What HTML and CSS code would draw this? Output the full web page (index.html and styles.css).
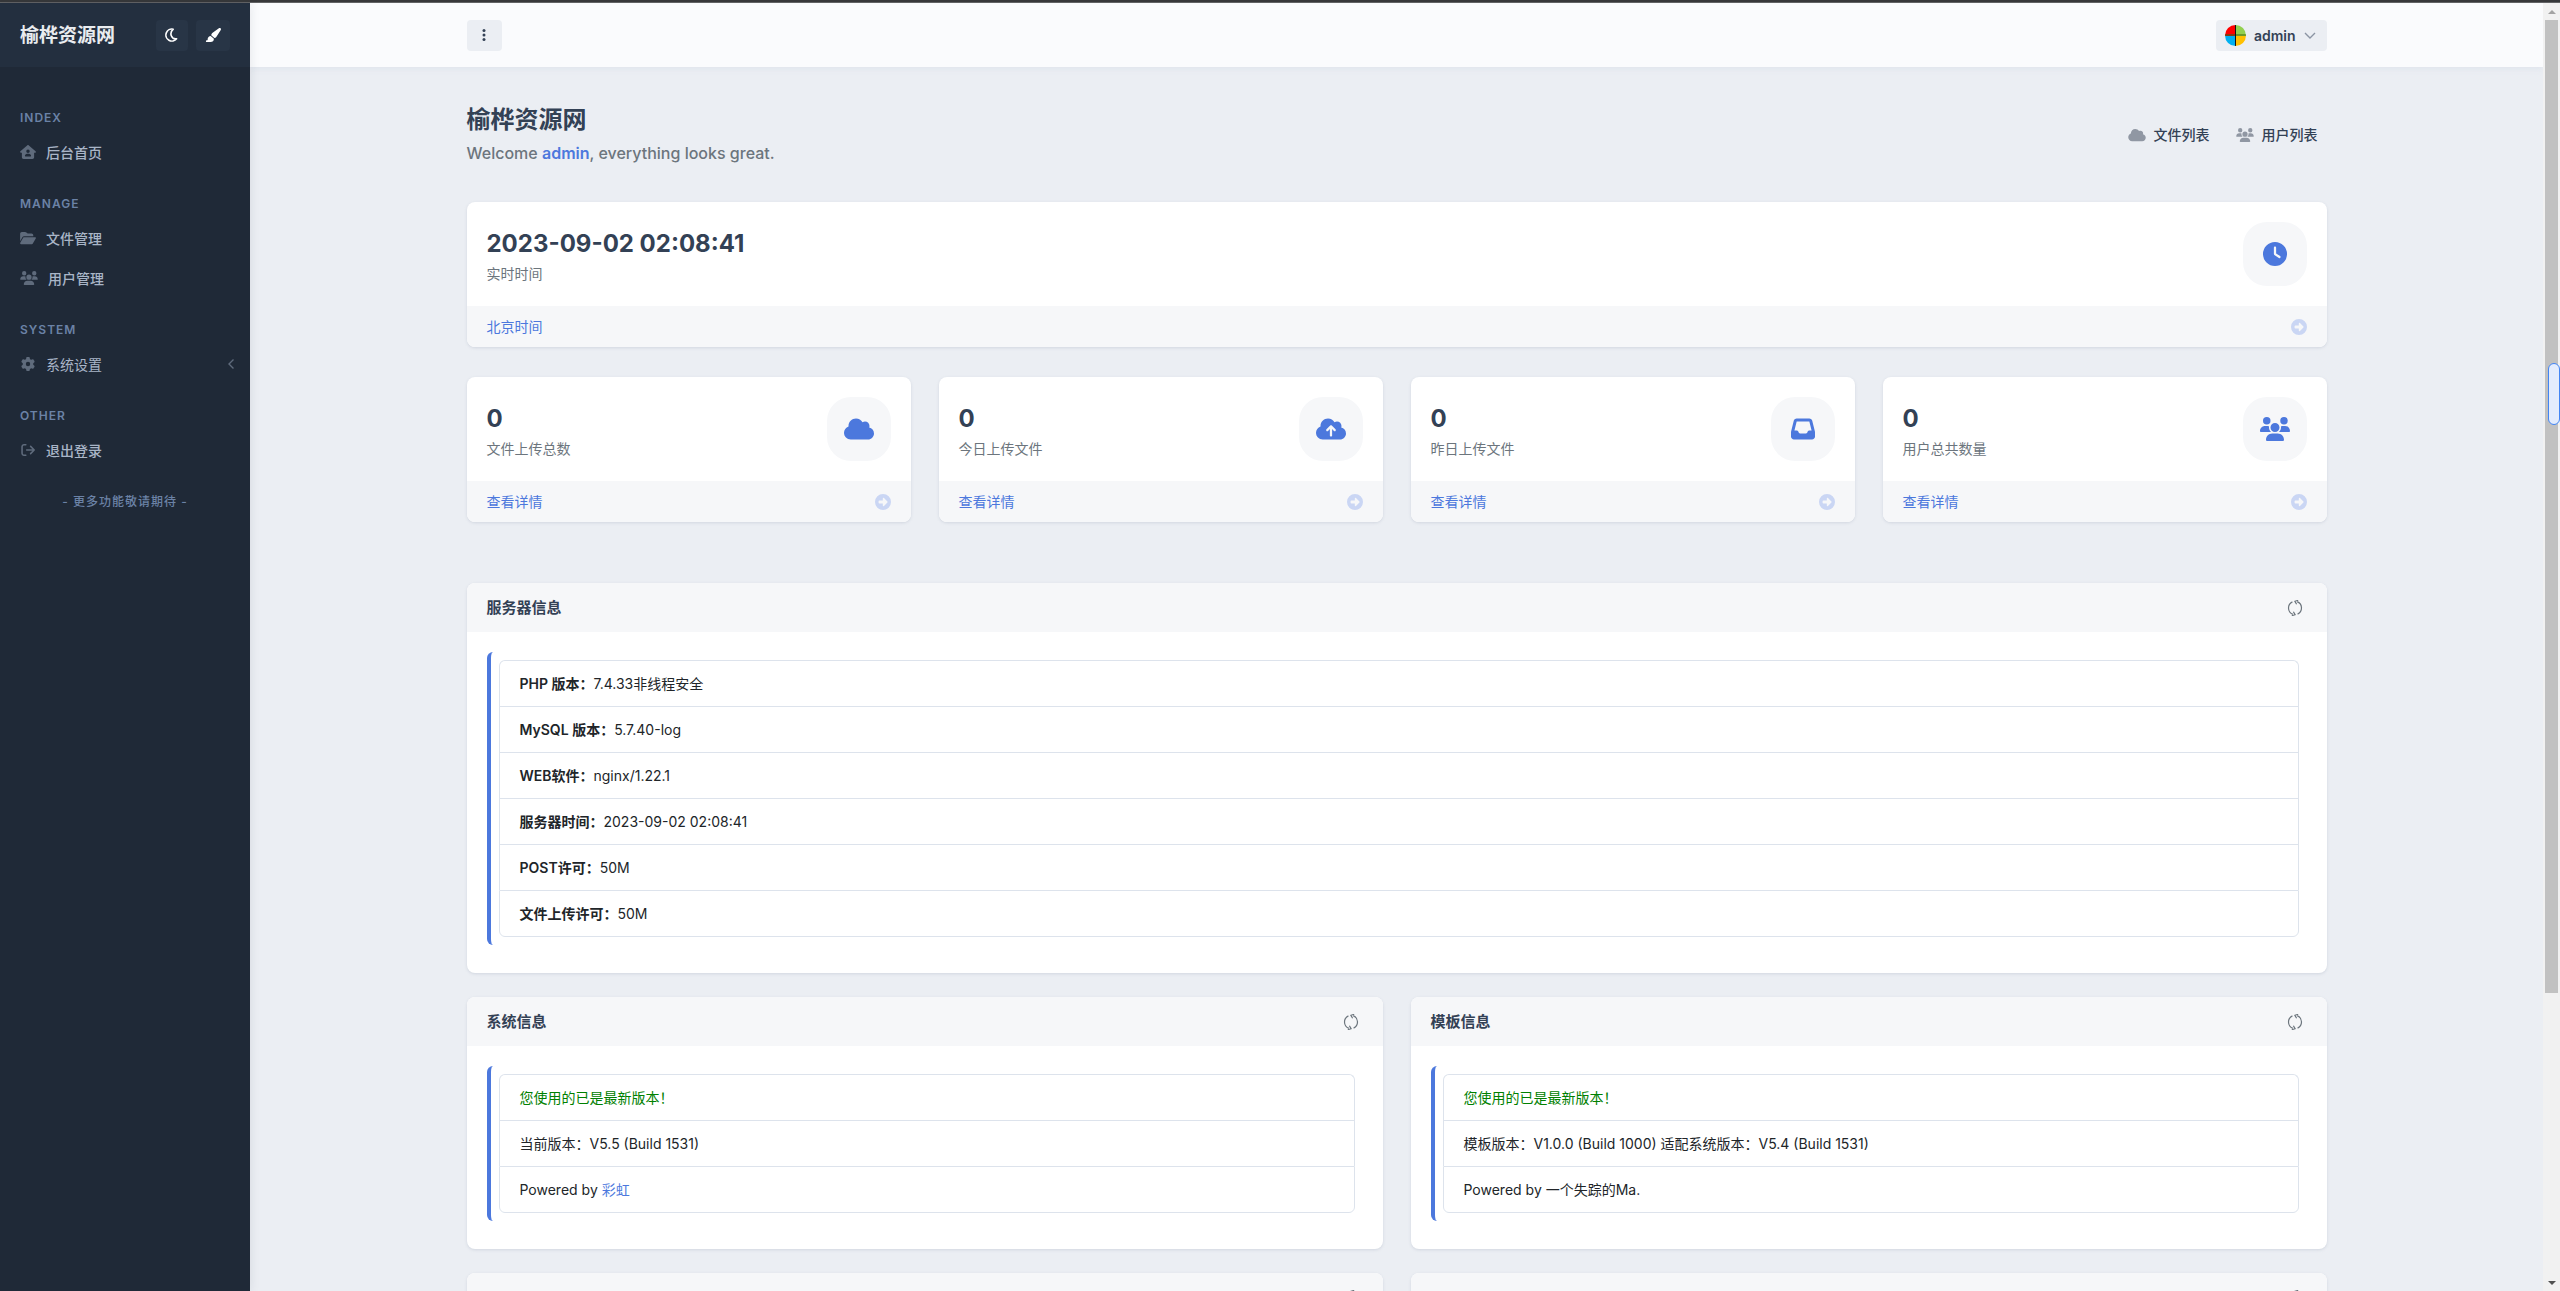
FILE: index.html
```html
<!DOCTYPE html>
<html lang="zh-CN">
<head>
  <meta charset="utf-8">
  <title>榆桦资源网</title>
  <link rel="stylesheet" href="styles.css">
</head>
<body>

  <!-- icon sprite -->
  <svg class="sprite" aria-hidden="true">
    <symbol id="cloud" viewBox="0 0 640 512"><path d="M0 336c0 79.5 64.5 144 144 144H512c70.7 0 128-57.3 128-128c0-61.9-44-113.6-102.4-125.4c4.1-10.7 6.4-22.4 6.4-34.6c0-53-43-96-96-96c-19.7 0-38.1 6-53.3 16.2C367 64.2 315.3 32 256 32C167.6 32 96 103.6 96 192c0 2.7 .1 5.4 .2 8.1C40.2 219.8 0 273.2 0 336z"/></symbol>
    <symbol id="cloud-up" viewBox="0 0 640 512"><path d="M144 480C64.5 480 0 415.5 0 336c0-62.8 40.2-116.2 96.2-135.9c-.1-2.7-.2-5.4-.2-8.1c0-88.4 71.6-160 160-160c59.3 0 111 32.2 138.7 80.2C409.9 102 428.3 96 448 96c53 0 96 43 96 96c0 12.2-2.3 23.8-6.4 34.6C596 238.4 640 290.1 640 352c0 70.7-57.3 128-128 128H144zm79-217c-9.4 9.4-9.4 24.6 0 33.9s24.6 9.4 33.9 0l39-39V392c0 13.3 10.7 24 24 24s24-10.7 24-24V257.9l39 39c9.4 9.4 24.6 9.4 33.9 0s9.4-24.6 0-33.9l-80-80c-9.4-9.4-24.6-9.4-33.9 0l-80 80z"/></symbol>
    <symbol id="clock" viewBox="0 0 512 512"><path fill-rule="evenodd" d="M256 0a256 256 0 1 1 0 512A256 256 0 1 1 256 0zM232 120V256c0 8 4 15.5 10.7 20l96 64c11 7.4 25.9 4.4 33.3-6.7s4.4-25.9-6.7-33.3L280 243.2V120c0-13.3-10.7-24-24-24s-24 10.7-24 24z"/></symbol>
    <symbol id="inbox" viewBox="0 0 512 512"><path fill-rule="evenodd" d="M121 32C91.6 32 66 52 58.9 80.5L1.9 308.4C.6 313.5 0 318.7 0 323.9V416c0 35.3 28.7 64 64 64H448c35.3 0 64-28.7 64-64V323.9c0-5.2-.6-10.4-1.9-15.5l-57-227.9C446 52 420.4 32 391 32H121zm0 64H391l48 192H387.8c-12.1 0-23.2 6.8-28.6 17.7l-14.3 28.6c-5.4 10.8-16.5 17.7-28.6 17.7H195.8c-12.1 0-23.2-6.8-28.6-17.7l-14.3-28.6c-5.4-10.8-16.5-17.7-28.6-17.7H73L121 96z"/></symbol>
    <symbol id="users" viewBox="0 0 640 512"><path d="M144 0a80 80 0 1 1 0 160A80 80 0 1 1 144 0zM512 0a80 80 0 1 1 0 160A80 80 0 1 1 512 0zM0 298.7C0 239.8 47.8 192 106.7 192h42.7c15.9 0 31 3.5 44.6 9.7c-1.3 7.2-1.9 14.7-1.9 22.3c0 38.2 16.8 72.5 43.3 96c-.2 0-.4 0-.7 0H21.3C9.6 320 0 310.4 0 298.7zM405.3 320c-.2 0-.4 0-.7 0c26.6-23.5 43.3-57.8 43.3-96c0-7.6-.7-15-1.9-22.3c13.6-6.3 28.7-9.7 44.6-9.7h42.7C592.2 192 640 239.8 640 298.7c0 11.8-9.6 21.3-21.3 21.3H405.3zM224 224a96 96 0 1 1 192 0 96 96 0 1 1 -192 0zM128 485.3C128 411.7 187.7 352 261.3 352H378.7C452.3 352 512 411.7 512 485.3c0 14.7-11.9 26.7-26.7 26.7H154.7c-14.7 0-26.7-11.9-26.7-26.7z"/></symbol>
    <symbol id="gear" viewBox="0 0 512 512"><path fill-rule="evenodd" d="M495.9 166.6c3.2 8.7 .5 18.4-6.4 24.6l-43.3 39.4c1.1 8.3 1.7 16.8 1.7 25.4s-.6 17.1-1.7 25.4l43.3 39.4c6.9 6.2 9.6 15.9 6.4 24.6c-4.4 11.9-9.7 23.3-15.8 34.3l-4.7 8.1c-6.6 11-14 21.4-22.1 31.2c-5.9 7.2-15.7 9.6-24.5 6.8l-55.7-17.7c-13.4 10.3-28.2 18.9-44 25.4l-12.5 57.1c-2 9.1-9 16.3-18.2 17.8c-13.8 2.3-28 3.5-42.5 3.5s-28.7-1.2-42.5-3.5c-9.2-1.5-16.2-8.7-18.2-17.8l-12.5-57.1c-15.8-6.5-30.6-15.1-44-25.4L83.1 425.9c-8.8 2.8-18.6 .3-24.5-6.8c-8.1-9.8-15.5-20.2-22.1-31.2l-4.7-8.1c-6.1-11-11.4-22.4-15.8-34.3c-3.2-8.7-.5-18.4 6.4-24.6l43.3-39.4C64.6 273.1 64 264.6 64 256s.6-17.1 1.7-25.4L22.4 191.2c-6.9-6.2-9.6-15.9-6.4-24.6c4.4-11.9 9.7-23.3 15.8-34.3l4.7-8.1c6.6-11 14-21.4 22.1-31.2c5.9-7.2 15.7-9.6 24.5-6.8l55.7 17.7c13.4-10.3 28.2-18.9 44-25.4l12.5-57.1c2-9.1 9-16.3 18.2-17.8C227.3 1.2 241.5 0 256 0s28.7 1.2 42.5 3.5c9.2 1.5 16.2 8.7 18.2 17.8l12.5 57.1c15.8 6.5 30.6 15.1 44 25.4l55.7-17.7c8.8-2.8 18.6-.3 24.5 6.8c8.1 9.8 15.5 20.2 22.1 31.2l4.7 8.1c6.1 11 11.4 22.4 15.8 34.3zM256 336a80 80 0 1 0 0-160 80 80 0 1 0 0 160z"/></symbol>
    <symbol id="folder" viewBox="0 0 576 512"><path d="M88.7 223.8L0 375.8V96C0 60.7 28.7 32 64 32H181.5c17 0 33.3 6.7 45.3 18.7l26.5 26.5c12 12 28.3 18.7 45.3 18.7H416c35.3 0 64 28.7 64 64v32H144c-22.8 0-43.8 12.1-55.3 31.8zm27.6 16.1C122.1 230 132.6 224 144 224H544c11.5 0 22 6.1 27.7 16.1s5.7 22.2-.1 32.1l-112 192C453.9 474 443.4 480 432 480H32c-11.5 0-22-6.1-27.7-16.1s-5.7-22.2 .1-32.1l112-192z"/></symbol>
    <symbol id="home" viewBox="0 0 576 512"><path fill-rule="evenodd" d="M543.8 287.6c17 0 32-14 32-32.1c1-9-3-17-11-24L309.5 7c-6-5-14-7-21-7s-15 1-22 8L10 231.5c-7 7-10 15-10 24c0 18 14 32.1 32 32.1h32V448c0 35.3 28.7 64 64 64H448.5c35.5 0 64.2-28.8 64-64.3l-.7-160.2h32zM288 160a64 64 0 1 1 0 128 64 64 0 1 1 0-128zM176 400c0-44.2 35.8-80 80-80h64c44.2 0 80 35.8 80 80c0 8.8-7.2 16-16 16H192c-8.8 0-16-7.2-16-16z"/></symbol>
    <symbol id="brush" viewBox="0 0 576 512"><path d="M339.3 367.1c27.3-3.9 51.9-19.4 67.2-42.9L568.2 74.1c12.6-19.5 9.4-45.3-7.6-61.2S517.7-4.4 499.1 9.6L262.4 187.2c-24 18-38.2 46.1-38.4 76.1L339.3 367.1zm-19.6 25.4l-116-104.4C143.9 290.3 96 339.6 96 400c0 3.9 .2 7.8 .6 11.6C98.4 429.1 86.4 448 68.8 448H64c-17.7 0-32 14.3-32 32s14.3 32 32 32H208c61.9 0 112-50.1 112-112c0-2.5-.1-5-.2-7.5z"/></symbol>
    <symbol id="moon" viewBox="1 0 14 14"><path fill="none" stroke="currentColor" stroke-width="1.6" stroke-linejoin="round" d="M9.2 1.2A6 6 0 1 0 12.6 10.8C7.4 11.6 4.8 5.2 9.2 1.2z"/></symbol>
    <symbol id="dots" viewBox="0 0 14 14"><circle cx="7" cy="2.5" r="1.5"/><circle cx="7" cy="7" r="1.5"/><circle cx="7" cy="11.5" r="1.5"/></symbol>
    <symbol id="logout" viewBox="0 0 16 16"><path fill="none" stroke="currentColor" stroke-width="1.8" stroke-linecap="round" stroke-linejoin="round" d="M5.5 2H3.6A2.2 2.2 0 0 0 1.2 4.2v7.6A2.2 2.2 0 0 0 3.6 14h1.9M6.5 8h8.6M11 3.9L15.1 8 11 12.1"/></symbol>
    <symbol id="left" viewBox="0 0 10 10"><path fill="none" stroke="currentColor" stroke-width="1.4" d="M7.5 .5L3 5l4.5 4.5"/></symbol>
    <symbol id="down" viewBox="0 0 12 12"><path fill="none" stroke="currentColor" stroke-width="1.4" d="M1 4l5 5 5-5"/></symbol>
    <symbol id="go" viewBox="0 0 16 16"><path fill-rule="evenodd" d="M8 0a8 8 0 1 1 0 16A8 8 0 1 1 8 0zM4.4 6.5c-.5 0-.8.3-.8.8v1.4c0 .5.3.8.8.8h3.4v1.9c0 .7.7 1 1.2.6l3.4-3.4c.4-.4.4-.8 0-1.2L9 4c-.5-.4-1.2-.1-1.2.6v1.9z"/></symbol>
    <symbol id="refresh" viewBox="0 0 16 16"><path fill="none" stroke="currentColor" stroke-width="1.2" d="M5.4 1.9A6.8 6.8 0 0 0 5.9 14.4M10.6 14.1A6.8 6.8 0 0 0 10.1 1.6M11.2 .3L7.9 1.3l1.7 3M4.8 15.7l3.3-1-1.7-3"/></symbol>
  </svg>

  <div class="window-edge"></div>

  <div class="page">
    <aside class="sidebar">
      <div class="sidebar-header">
        <a class="brand" href="#">榆桦资源网</a>
        <button class="side-btn" aria-label="夜间模式"><svg class="icon-14"><use href="#moon"/></svg></button>
        <button class="side-btn wide" aria-label="主题"><svg class="icon-16"><use href="#brush"/></svg></button>
      </div>
      <nav class="nav">
        <div class="nav-heading">Index</div>
        <a class="nav-link" href="#"><svg><use href="#home"/></svg>后台首页</a>
        <div class="nav-heading">Manage</div>
        <a class="nav-link" href="#"><svg><use href="#folder"/></svg>文件管理</a>
        <a class="nav-link" href="#"><svg class="users"><use href="#users"/></svg>用户管理</a>
        <div class="nav-heading">System</div>
        <a class="nav-link sub" href="#"><svg><use href="#gear"/></svg>系统设置<svg class="caret"><use href="#left"/></svg></a>
        <div class="nav-heading">Other</div>
        <a class="nav-link" href="#"><svg><use href="#logout"/></svg>退出登录</a>
        <div class="nav-heading center">- 更多功能敬请期待 -</div>
      </nav>
    </aside>

    <div class="main">
      <header class="topbar">
        <div class="container">
          <button class="top-btn dots" aria-label="菜单"><svg class="icon-14"><use href="#dots"/></svg></button>
          <button class="top-btn user">
            <svg class="avatar" viewBox="0 0 21 21">
              <clipPath id="round"><circle cx="10.5" cy="10.5" r="10.5"/></clipPath>
              <g clip-path="url(#round)">
                <path fill="#f00" d="M0 0h10v10H0z"/>
                <path fill="#92d050" d="M11 0h10v10H11z"/>
                <path fill="#00b0f0" d="M0 10h10v11H0z"/>
                <path fill="#ffc000" d="M11 10h10v11H11z"/>
                <path fill="#8a3a10" d="M0 9h10v2H0z"/>
                <path fill="#6a9a2c" d="M11 9h10v2H11z"/>
                <path fill="#111" d="M10 0h1v21h-1z"/>
              </g>
            </svg>
            admin
            <svg class="icon-12"><use href="#down"/></svg>
          </button>
        </div>
      </header>

      <main class="container content">
        <div class="hero">
          <div>
            <h1>榆桦资源网</h1>
            <h2>Welcome <a href="#">admin</a>, everything looks great.</h2>
          </div>
          <div class="hero-links">
            <a href="#"><svg><use href="#cloud"/></svg>文件列表</a>
            <a href="#"><svg><use href="#users"/></svg>用户列表</a>
          </div>
        </div>

        <div class="stats">
          <div class="stat full">
            <div class="stat-body">
              <div>
                <div class="num">2023-09-02 02:08:41</div>
                <div class="label">实时时间</div>
              </div>
              <div class="stat-icon"><svg><use href="#clock"/></svg></div>
            </div>
            <a class="stat-footer" href="#">北京时间<svg><use href="#go"/></svg></a>
          </div>
          <div class="stat">
            <div class="stat-body">
              <div>
                <div class="num">0</div>
                <div class="label">文件上传总数</div>
              </div>
              <div class="stat-icon"><svg><use href="#cloud"/></svg></div>
            </div>
            <a class="stat-footer" href="#">查看详情<svg><use href="#go"/></svg></a>
          </div>
          <div class="stat">
            <div class="stat-body">
              <div>
                <div class="num">0</div>
                <div class="label">今日上传文件</div>
              </div>
              <div class="stat-icon"><svg><use href="#cloud-up"/></svg></div>
            </div>
            <a class="stat-footer" href="#">查看详情<svg><use href="#go"/></svg></a>
          </div>
          <div class="stat">
            <div class="stat-body">
              <div>
                <div class="num">0</div>
                <div class="label">昨日上传文件</div>
              </div>
              <div class="stat-icon"><svg><use href="#inbox"/></svg></div>
            </div>
            <a class="stat-footer" href="#">查看详情<svg><use href="#go"/></svg></a>
          </div>
          <div class="stat">
            <div class="stat-body">
              <div>
                <div class="num">0</div>
                <div class="label">用户总共数量</div>
              </div>
              <div class="stat-icon"><svg><use href="#users"/></svg></div>
            </div>
            <a class="stat-footer" href="#">查看详情<svg><use href="#go"/></svg></a>
          </div>
        </div>

        <div class="blocks">
          <section class="block full">
            <div class="block-header">
              <h3>服务器信息</h3>
              <button aria-label="刷新"><svg><use href="#refresh"/></svg></button>
            </div>
            <div class="block-content">
              <ul class="list">
                <li><b>PHP 版本：</b>7.4.33非线程安全</li>
                <li><b>MySQL 版本：</b>5.7.40-log</li>
                <li><b>WEB软件：</b>nginx/1.22.1</li>
                <li><b>服务器时间：</b>2023-09-02 02:08:41</li>
                <li><b>POST许可：</b>50M</li>
                <li><b>文件上传许可：</b>50M</li>
              </ul>
            </div>
          </section>

          <section class="block">
            <div class="block-header">
              <h3>系统信息</h3>
              <button aria-label="刷新"><svg><use href="#refresh"/></svg></button>
            </div>
            <div class="block-content">
              <ul class="list">
                <li class="ok">您使用的已是最新版本！</li>
                <li>当前版本：V5.5 (Build 1531)</li>
                <li>Powered by <a href="#">彩虹</a></li>
              </ul>
            </div>
          </section>

          <section class="block">
            <div class="block-header">
              <h3>模板信息</h3>
              <button aria-label="刷新"><svg><use href="#refresh"/></svg></button>
            </div>
            <div class="block-content">
              <ul class="list">
                <li class="ok">您使用的已是最新版本！</li>
                <li>模板版本：V1.0.0 (Build 1000) 适配系统版本：V5.4 (Build 1531)</li>
                <li>Powered by 一个失踪的Ma.</li>
              </ul>
            </div>
          </section>

          <section class="block">
            <div class="block-header">
              <h3></h3>
              <button aria-label="刷新"><svg><use href="#refresh"/></svg></button>
            </div>
          </section>

          <section class="block">
            <div class="block-header">
              <h3></h3>
              <button aria-label="刷新"><svg><use href="#refresh"/></svg></button>
            </div>
          </section>
        </div>
      </main>
    </div>

    <div class="scrollbar">
      <div class="arrow up"></div>
      <div class="track"><div class="thumb"></div></div>
      <div class="arrow down"></div>
      <div class="marker"></div>
    </div>
  </div>

</body>
</html>
```
FILE: styles.css
```css
* {
  box-sizing: border-box;
}

body {
  margin: 0;
  height: 100vh;
  display: flex;
  flex-direction: column;
  overflow: hidden;
  font-family: Inter, "Noto Sans CJK SC", sans-serif;
  font-size: 14px;
  line-height: 21px;
  color: #212529;
  background: #ebeef3;
}

a {
  color: #4c78dd;
  text-decoration: none;
}

button {
  font: inherit;
  border: 0;
  padding: 0;
  cursor: pointer;
}

svg {
  fill: currentColor;
  flex: none;
}

h1, h2, h3 {
  margin: 0;
}

.sprite {
  display: none;
}

.icon-12 { width: 12px; height: 12px; }
.icon-14 { width: 14px; height: 14px; }
.icon-16 { width: 16px; height: 16px; }

.window-edge {
  flex: none;
  height: 3px;
  background: #37383a;
  border-bottom: 1px solid #626365;
}

.page {
  flex: 1;
  min-height: 0;
  display: flex;
}

/* sidebar */
.sidebar {
  flex: none;
  width: 250px;
  background: #1f2937;
  box-shadow: 0 0 10px rgba(31, 41, 55, 0.1);
  z-index: 1;
}

.sidebar-header {
  height: 64px;
  padding: 0 20px;
  display: flex;
  align-items: center;
  gap: 8px;
  background: #232f3f;
}

.brand {
  flex: 1;
  font-size: 19px;
  font-weight: 700;
  color: #e9ecef;
}

.side-btn {
  width: 32px;
  height: 31px;
  display: flex;
  align-items: center;
  justify-content: center;
  color: #fff;
  background: #283546;
  border-radius: 4px;
}

.side-btn.wide {
  width: 34px;
}

.nav {
  padding-top: 19px;
}

.nav-heading {
  padding: 25px 20px 7px;
  font-size: 12px;
  line-height: 14px;
  font-weight: 600;
  letter-spacing: 1px;
  text-transform: uppercase;
  color: #6b82a6;
}

.nav-heading.center {
  text-align: center;
  font-weight: 500;
}

.nav-link {
  height: 40px;
  padding: 0 20px;
  display: flex;
  align-items: center;
  font-weight: 500;
  color: #a9b5c7;
}

.nav-link.sub {
  font-weight: 400;
}

.nav-link svg {
  width: 16px;
  height: 14px;
  margin-right: 10px;
  color: #5f6b7c;
}

.nav-link svg.users {
  width: 18px;
}

.nav-link svg.caret {
  width: 10px;
  height: 10px;
  margin: 0 -6px 0 auto;
}

/* main column */
.main {
  flex: 1;
  min-width: 0;
  overflow: hidden;
}

.container {
  width: 100%;
  max-width: 1916px;
  margin: 0 auto;
  padding: 0 28px;
}

.topbar {
  background: #fafbfd;
  box-shadow: 0 2px 5px rgba(200, 208, 224, 0.3);
}

.topbar .container {
  height: 64px;
  display: flex;
  align-items: center;
  justify-content: space-between;
}

.top-btn {
  height: 31px;
  display: flex;
  align-items: center;
  justify-content: center;
  gap: 8px;
  font-weight: 600;
  color: #334155;
  background: #ebeef3;
  border-radius: 4px;
}

.top-btn.dots {
  width: 35px;
}

.top-btn.user {
  padding: 0 11px 0 9px;
}

.avatar {
  width: 21px;
  height: 21px;
}

.top-btn .icon-12 {
  color: #8b94a3;
}

.hero {
  height: 135px;
  display: flex;
  align-items: center;
  justify-content: space-between;
}

.hero h1 {
  margin-bottom: 6px;
  font-size: 24px;
  line-height: 30px;
  font-weight: 700;
  color: #334155;
}

.hero h2 {
  font-size: 16px;
  line-height: 24px;
  font-weight: 500;
  color: #6c757d;
}

.hero h2 a {
  font-weight: 600;
}

.hero-links {
  display: flex;
  gap: 26px;
  padding-right: 9px;
}

.hero-links a {
  display: flex;
  align-items: center;
  gap: 8px;
  font-weight: 500;
  color: #334155;
}

.hero-links svg {
  width: 18px;
  height: 14px;
  color: #9097a3;
}

/* stat tiles */
.stats {
  display: grid;
  grid-template-columns: repeat(4, 1fr);
  gap: 30px 28px;
  margin-bottom: 61px;
}

.full {
  grid-column: 1 / -1;
}

.stat, .block {
  background: #fff;
  border-radius: 8px;
  overflow: hidden;
  box-shadow: 0 1px 3px rgba(150, 160, 180, 0.3);
}

.stat-body {
  height: 104px;
  padding: 0 20px;
  display: flex;
  align-items: center;
  justify-content: space-between;
}

.num {
  font-size: 24px;
  line-height: 38px;
  font-weight: 700;
  color: #334155;
}

.label {
  line-height: 21px;
  color: #6c757d;
}

.stat-icon {
  width: 64px;
  height: 64px;
  display: flex;
  align-items: center;
  justify-content: center;
  color: #4c78dd;
  background: #f6f7f9;
  border-radius: 24px;
}

.stat-icon svg {
  width: 30px;
  height: 24px;
}

.stat-footer {
  height: 41px;
  padding: 0 20px;
  display: flex;
  align-items: center;
  justify-content: space-between;
  background: #f6f7f9;
}

.stat-footer svg {
  width: 16px;
  height: 16px;
  color: #cad6f4;
}

/* info blocks */
.blocks {
  display: grid;
  grid-template-columns: 1fr 1fr;
  gap: 24px 28px;
}

.block-header {
  height: 49px;
  padding: 0 24px 0 20px;
  display: flex;
  align-items: center;
  justify-content: space-between;
  background: #f6f7f9;
}

.block-header h3 {
  font-size: 15px;
  font-weight: 600;
  color: #334155;
}

.block-header button {
  display: flex;
  background: none;
  color: #6c757d;
}

.block-header svg {
  width: 16px;
  height: 16px;
}

.block-content {
  padding: 20px 20px 28px;
}

.list {
  list-style: none;
  margin: 0;
  padding: 8px;
  border-left: 4px solid #4c78dd;
  border-radius: 6px;
}

.list li {
  height: 46px;
  padding: 0 20px;
  line-height: 45px;
  border: 1px solid #dde3ec;
  border-bottom: 0;
}

.list li:first-child {
  border-radius: 6px 6px 0 0;
}

.list li:last-child {
  height: 47px;
  border-bottom: 1px solid #dde3ec;
  border-radius: 0 0 6px 6px;
}

.list b {
  font-weight: 600;
}

.ok {
  color: #008000;
}

/* scrollbar */
.scrollbar {
  position: relative;
  flex: none;
  width: 17px;
  display: flex;
  flex-direction: column;
  background: #f1f1f1;
}

.track {
  flex: 1;
  padding: 0 2px;
}

.thumb {
  height: 77.6%;
  background: #c1c1c1;
}

.arrow {
  height: 17px;
  display: flex;
  align-items: center;
  justify-content: center;
}

.arrow::before {
  content: "";
  border: 4px solid transparent;
}

.arrow.up::before {
  border-top: 0;
  border-bottom-color: #a3a3a3;
}

.arrow.down::before {
  border-bottom: 0;
  border-top-color: #505050;
}

.marker {
  position: absolute;
  top: 360px;
  right: 0;
  width: 12px;
  height: 62px;
  background: #e3ecfd;
  border: 1px solid #4285f4;
  border-radius: 6px;
}
```
